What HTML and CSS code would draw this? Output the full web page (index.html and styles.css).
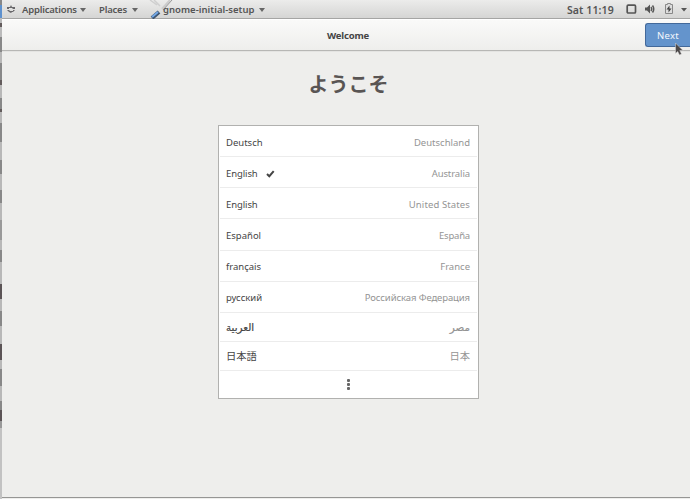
FILE: index.html
```html
<!DOCTYPE html>
<html lang="en">
<head>
<meta charset="utf-8">
<title>Welcome</title>
<link rel="stylesheet" href="styles.css">
</head>
<body>
<nav class="panel">
  <svg class="foot" width="10" height="10" viewBox="0 0 10 10"><path d="M1 3h3l1-2 1 2h3v2H7L6 4H3v1H1zM1 6h2l1 1h3V6h2l-2 2H6L5 9 3 8z" fill="#68676a"/></svg>
  <span class="menu apps">Applications</span><i class="arrow"></i>
  <span class="menu places">Places</span><i class="arrow"></i>
  <span class="app"><svg class="tools" width="30" height="19" viewBox="0 0 30 19"><path d="M2 0l7 5M6 0l6 6" fill="none" stroke="#cfcfcf" stroke-width="1.500"/><path d="M22 0l-8 9" stroke="#ccc" stroke-width="2"/><path d="M24 0l-9 10" stroke="#999" fill="none"/><path d="M4 18l7-6" stroke="#3e5570" stroke-width="4"/><path d="M4 17l6-5" stroke="#73a7e5" stroke-width="2"/></svg><span class="menu setup">gnome-initial-setup</span></span><i class="arrow"></i>
  <span class="menu clock">Sat 11:19</span>
  <svg class="status" width="63" height="18" viewBox="0 0 63 18">
    <rect x="1.200" y="5.200" width="8.300" height="7.800" rx="1" fill="none" stroke="#555" stroke-width="1.700"/>
    <path d="M19 7.500h2l3-3v9l-3-3h-2z" fill="#555"/><path d="M25 7q1.500 2 0 4M26.500 5.500q2.500 3.500 0 7" fill="none" stroke="#555" stroke-width="1.500"/>
    <path d="M39.500 4.500h2v-1h3v1h2v9h-7z" fill="#ddd" stroke="#888"/><path d="M43.500 5.500l-3 4h2v3l3-4h-2z" fill="#444"/>
    <path d="M55 8h6l-3 3.500z" fill="#555"/>
  </svg>
</nav>
<header class="header">
  <h1>Welcome</h1>
  <button class="next">Next</button>
</header>
<main class="page">
  <h2 lang="ja">ようこそ</h2>
  <div class="list">
    <div class="row"><span>Deutsch</span><span class="country">Deutschland</span></div>
    <div class="row"><span class="english">English</span><svg class="check" width="9" height="8" viewBox="0 0 9 8"><path d="M1 4l2.300 2.200L7.700 1.200" fill="none" stroke="#444" stroke-width="2"/></svg><span class="country australia">Australia</span></div>
    <div class="row"><span class="english">English</span><span class="country states">United States</span></div>
    <div class="row"><span>Español</span><span class="country espana">España</span></div>
    <div class="row"><span>français</span><span class="country">France</span></div>
    <div class="row"><span>русский</span><span class="country russia">Российская Федерация</span></div>
    <div class="row"><span class="arabic" lang="ar">العربية</span><span class="country arabic" lang="ar">مصر</span></div>
    <div class="row"><span class="cjk" lang="ja">日本語</span><span class="country cjk" lang="ja">日本</span></div>
    <div class="row more"><i></i><i></i><i></i></div>
  </div>
</main>
<div class="edge"></div>
<svg class="cursor" width="10" height="14" viewBox="0 0 10 14"><path d="M1.500 1v10.500l2.200-2L5.500 13l2-1-1.700-3.500H9z" fill="#4d4949" stroke="#ddd" stroke-width=".5"/></svg>
</body>
</html>
```
FILE: styles.css
```css
* { box-sizing: border-box; }
body {
  margin: 0;
  width: 690px;
  height: 499px;
  overflow: hidden;
  position: relative;
  display: flex;
  flex-direction: column;
  background: #eeeeec;
  color: #444;
  font: 9.5px/14px "Noto Sans", "Noto Sans CJK JP", sans-serif;
}
.panel {
  height: 19px;
  flex: none;
  display: flex;
  align-items: center;
  padding-left: 6px;
  border-bottom: 1px solid #a5a5a4;
  background: linear-gradient(#ececeb, #d5d5d4);
}
.menu { font-weight: 600; color: #555; white-space: nowrap; line-height: 20px; height: 18px; flex: none; }
.foot { margin-right: 6px; }
.apps { width: 54px; letter-spacing: -.2px; }
.places { width: 29px; margin-left: 13px; letter-spacing: -.2px; }
.app { position: relative; margin-left: 25px; width: 92px; height: 18px; }
.setup { position: relative; display: block; letter-spacing: .03px; }
.tools { position: absolute; left: -15px; top: 0; }
.arrow { border: 3px solid transparent; border-top: 4px solid #666; border-bottom: 0; margin: 1px 0 0 4px; }
.clock { margin-left: auto; width: 47px; font-size: 10.5px; letter-spacing: .1px; }
.status { margin-left: 12px; margin-right: 1px; }
.header {
  height: 32px;
  flex: none;
  display: grid;
  grid-template-columns: 1fr auto 1fr;
  align-items: center;
  padding-left: 6px;
  border-top: 1px solid #fff;
  border-bottom: 1px solid #b7b7b5;
  background: linear-gradient(#fafaf9, #eeeeec);
}
h1 { grid-column: 2; margin: 2px 0 0; font-size: 9.5px; line-height: 14px; font-weight: 700; letter-spacing: -.15px; }
.next {
  justify-self: end;
  width: 45px;
  height: 24px;
  margin-top: 0;
  padding: 1px 0 0;
  border: 1px solid #43699a;
  border-right: 0;
  border-radius: 3px 0 0 3px;
  background: #6494cc;
  color: #f5f8fc;
  font: 9.5px/20px "Noto Sans", sans-serif;
  letter-spacing: .3px;
}
.page { flex: 1; padding-left: 218px; border-bottom: 1px solid #969694; box-shadow: inset 0 1px #e4e4e2; margin-bottom: 1px; }
h2 { width: 261px; margin: 18px 0 0; text-align: center; font: 700 20px/30px "Noto Sans CJK JP", sans-serif; color: #595554; }
.list {
  width: 261px;
  height: 274px;
  margin-top: 26px;
  padding: 0 1px;
  border: 1px solid #b1b1af;
  background: #fff;
  display: grid;
  grid-template-rows: 31px 31px 31px 32px 31px 31px 29px 29px 27px;
}
.row { display: flex; align-items: center; padding: 2px 7px 0 6px; border-bottom: 1px solid #ececec; white-space: nowrap; }
.row:nth-child(n+7) { padding-top: 0; }
.row:nth-child(-n+3) { padding-top: 3px; }
.country { margin-left: auto; color: #949494; }
.english, .australia { letter-spacing: -.1px; }
.states { letter-spacing: .12px; }
.espana { letter-spacing: -.2px; }
.russia { letter-spacing: -.1px; }
.check { margin-left: 8px; }
.arabic { font-family: "DejaVu Sans", sans-serif; font-size: 10.3px; -webkit-text-stroke: .2px; }
.cjk { font: 10.3px/16px "Noto Sans CJK JP", sans-serif; }
.row.more { flex-direction: column; justify-content: center; gap: 1px; border: 0; padding: 0; }
.more i { width: 3px; height: 3px; border-radius: 1px; background: #666; }
.edge {
  position: absolute;
  left: 0;
  top: 0;
  width: 2px;
  height: 499px;
  background: linear-gradient(#888 0 5px, #5e91ce 5px 18px, #bbb 18px 23px, #635c5c 23px 27px, #bbb 27px 37px, #888 37px 52px, #b8b8b8 52px 63px, #888 63px 80px, #635c5c 80px 85px, #b8b8b8 85px 98px, #888 98px 109px, #635c5c 109px 112px, #b8b8b8 112px 123px, #888 123px 142px, #b8b8b8 142px 160px, #888 160px 174px, #b8b8b8 174px 190px, #888 190px 203px, #b8b8b8 203px 220px, #999 220px 240px, #b8b8b8 240px 250px, #888 250px 262px, #b8b8b8 262px 284px, #5b5456 284px 299px, #b8b8b8 299px 311px, #888 311px 326px, #b8b8b8 326px 344px, #5b5456 344px 360px, #b8b8b8 360px 369px, #888 369px 386px, #b8b8b8 386px 401px, #888 401px 410px, #5b5456 410px 421px, #999 421px 428px, #c2c2c2 428px);
}
.cursor { position: absolute; left: 674px; top: 42px; }
```
